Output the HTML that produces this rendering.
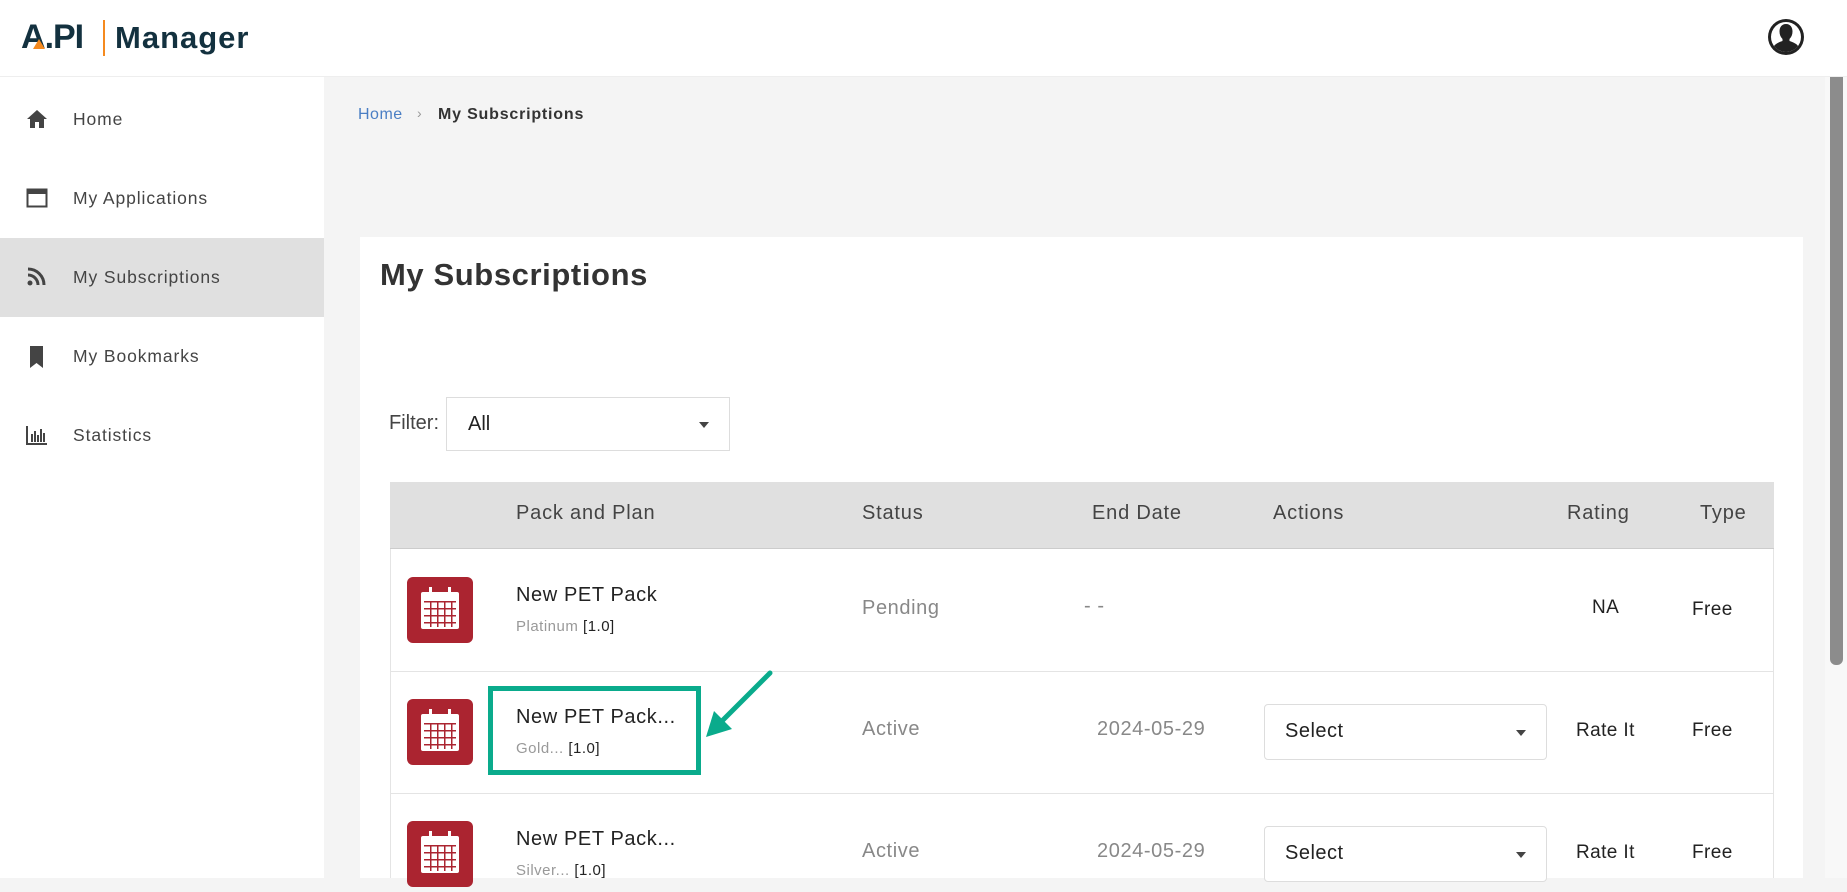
<!DOCTYPE html>
<html><head><meta charset="utf-8"><style>
*{box-sizing:border-box;margin:0;padding:0}
body{width:1847px;height:878px;overflow:hidden;background:#f4f4f4;font-family:"Liberation Sans",sans-serif;position:relative;color:#333}
.abs{position:absolute}
.hdr{left:0;top:0;width:1847px;height:77px;background:#fff;border-bottom:1px solid #eee}
.side{left:0;top:77px;width:324px;height:801px;background:#fff}
.item{position:absolute;left:0;width:324px;height:79px;font-size:17.5px;color:#444;line-height:79px;padding-left:73px;letter-spacing:.9px}
.item svg{position:absolute;left:26px;top:29px}
.card{left:360px;top:237px;width:1443px;height:641px;background:#fff}
.th{position:absolute;top:502px;font-size:20px;color:#444;letter-spacing:.8px}
.row{position:absolute;left:390px;width:1384px;border-top:1px solid #e4e4e4}
.ic{position:absolute;left:407px;width:66px;height:66px;background:#ab2430;border-radius:6px}
.nm{position:absolute;left:516px;font-size:20px;color:#222;letter-spacing:.6px}
.sb{position:absolute;left:516px;font-size:15px;color:#999;letter-spacing:.5px}
.sb span{color:#222}
.g{position:absolute;font-size:20px;color:#888;letter-spacing:.6px}
.d{position:absolute;font-size:19px;color:#222;letter-spacing:.4px}
.sel{position:absolute;left:1264px;width:283px;height:56px;border:1px solid #ddd;border-radius:4px;background:#fff;font-size:20px;color:#222;padding:15px 20px;letter-spacing:.5px}
.sel:after{content:"";position:absolute;right:20px;top:25px;border:5px solid transparent;border-top:6px solid #444}
</style></head><body>
<div class="abs hdr"></div>
<div class="abs" style="left:21px;top:18px;font-size:34px;font-weight:bold;color:#13313f;letter-spacing:-1px">
<span style="position:relative">A<span style="position:absolute;left:12px;top:21px;width:0;height:0;border-left:6px solid transparent;border-right:6px solid transparent;border-bottom:10px solid #f58a1f"></span></span>.PI</div>
<div class="abs" style="left:103px;top:20px;width:2px;height:36px;background:#f58a1f"></div>
<div class="abs" style="left:115px;top:20px;font-size:31px;font-weight:bold;color:#13313f;letter-spacing:1px">Manager</div>
<svg class="abs" style="left:1767px;top:18px" width="38" height="38" viewBox="0 0 38 38"><circle cx="19" cy="19" r="18" fill="#222"/><circle cx="19" cy="19" r="15" fill="#fff"/><path d="M19 6c-4.5 0-6.5 3.5-6.5 7.5 0 3 1 5.5 3 7.5v2c-3 1-7 2.5-8.5 5a15 15 0 0 0 24 0c-1.5-2.5-5.5-4-8.5-5v-2c2-2 3-4.5 3-7.5C25.5 9.5 23.5 6 19 6z" fill="#222"/></svg>
<div class="abs side"></div>
<div class="item" style="top:80px"><svg width="22" height="20" viewBox="0 0 22 20"><path d="M11 1L1 10h3v9h5v-6h4v6h5v-9h3z" fill="#444"/></svg>Home</div>
<div class="item" style="top:159px"><svg width="22" height="20" viewBox="0 0 22 20"><rect x="1.5" y="1.5" width="19" height="17" fill="none" stroke="#444" stroke-width="2"/><rect x="1" y="1" width="20" height="5" fill="#444"/></svg>My Applications</div>
<div class="item" style="top:238px;background:#e0e0e0"><svg width="22" height="20" viewBox="0 0 22 20"><circle cx="4" cy="16" r="2.5" fill="#444"/><path d="M2 8a10 10 0 0 1 10 10M2 2a16 16 0 0 1 16 16" stroke="#444" stroke-width="3" fill="none"/></svg>My Subscriptions</div>
<div class="item" style="top:317px"><svg width="22" height="22" viewBox="0 0 22 22"><path d="M4 0h13v22l-6.5-5L4 22z" fill="#444"/></svg>My Bookmarks</div>
<div class="item" style="top:396px"><svg width="22" height="20" viewBox="0 0 22 20"><path d="M1 1v18h20" stroke="#444" stroke-width="2" fill="none"/><path d="M6 9v8M9 6v11M12 10v7M15 4v13M18 8v9" stroke="#444" stroke-width="2"/></svg>Statistics</div>
<div class="abs" style="left:358px;top:106px;font-size:16px;color:#4a7ec4;letter-spacing:.5px">Home</div>
<div class="abs" style="left:417px;top:105px;font-size:14px;color:#999">›</div>
<div class="abs" style="left:438px;top:106px;font-size:16px;color:#333;font-weight:bold;letter-spacing:.8px">My Subscriptions</div>
<div class="abs card"></div>
<div class="abs" style="left:380px;top:257px;font-size:31px;font-weight:bold;color:#333;letter-spacing:.6px">My Subscriptions</div>
<div class="abs" style="left:389px;top:412px;font-size:20px;color:#444">Filter:</div>
<div class="abs" style="left:446px;top:397px;width:284px;height:54px;border:1px solid #ddd;background:#fff;font-size:20px;color:#222;padding:15px 21px">All<span style="position:absolute;right:20px;top:24px;border:5px solid transparent;border-top:6px solid #444"></span></div>
<div class="abs" style="left:390px;top:482px;width:1384px;height:396px;border-left:1px solid #e4e4e4;border-right:1px solid #e4e4e4"></div>
<div class="abs" style="left:390px;top:482px;width:1384px;height:67px;background:#e0e0e0;border-bottom:1px solid #ccc"></div>
<div class="th" style="left:516px">Pack and Plan</div>
<div class="th" style="left:862px">Status</div>
<div class="th" style="left:1092px">End Date</div>
<div class="th" style="left:1273px">Actions</div>
<div class="th" style="left:1567px">Rating</div>
<div class="th" style="left:1700px">Type</div>
<div class="row" style="top:671px"></div>
<div class="row" style="top:793px"></div>
<svg width="0" height="0" style="position:absolute"><defs><g id="cal"><rect x="14" y="15" width="38" height="37" rx="2" fill="#fff"/><rect x="22" y="10" width="3" height="8" fill="#fff"/><rect x="41" y="10" width="3" height="8" fill="#fff"/><g fill="#ab2430"><rect x="17" y="24" width="32" height="1.5"/><rect x="17" y="31" width="32" height="1.5"/><rect x="17" y="38" width="32" height="1.5"/><rect x="17" y="45" width="32" height="1.5"/><rect x="23" y="24" width="1.5" height="26"/><rect x="30" y="24" width="1.5" height="26"/><rect x="37" y="24" width="1.5" height="26"/><rect x="44" y="24" width="1.5" height="26"/></g></g></defs></svg>
<div class="ic" style="top:577px"><svg width="66" height="66"><use href="#cal"/></svg></div>
<div class="ic" style="top:699px"><svg width="66" height="66"><use href="#cal"/></svg></div>
<div class="ic" style="top:821px"><svg width="66" height="66"><use href="#cal"/></svg></div>
<div class="nm" style="top:584px">New PET Pack</div>
<div class="sb" style="top:618px">Platinum <span>[1.0]</span></div>
<div class="nm" style="top:706px">New PET Pack...</div>
<div class="sb" style="top:740px">Gold... <span>[1.0]</span></div>
<div class="nm" style="top:828px">New PET Pack...</div>
<div class="sb" style="top:862px">Silver... <span>[1.0]</span></div>
<div class="g" style="left:862px;top:597px">Pending</div>
<div class="g" style="left:1084px;top:595px">- -</div>
<div class="d" style="left:1592px;top:597px">NA</div>
<div class="d" style="left:1692px;top:599px">Free</div>
<div class="g" style="left:862px;top:718px">Active</div>
<div class="g" style="left:1097px;top:718px">2024-05-29</div>
<div class="sel" style="top:704px">Select</div>
<div class="d" style="left:1576px;top:720px">Rate It</div>
<div class="d" style="left:1692px;top:720px">Free</div>
<div class="g" style="left:862px;top:840px">Active</div>
<div class="g" style="left:1097px;top:840px">2024-05-29</div>
<div class="sel" style="top:826px">Select</div>
<div class="d" style="left:1576px;top:842px">Rate It</div>
<div class="d" style="left:1692px;top:842px">Free</div>
<div class="abs" style="left:488px;top:686px;width:213px;height:89px;border:5px solid #0aab8c"></div>
<svg class="abs" style="left:700px;top:665px" width="80" height="80" viewBox="0 0 80 80"><path d="M70 8L14 64" stroke="#0aab8c" stroke-width="5" stroke-linecap="round"/><path d="M6 72l8-26 18 18z" fill="#0aab8c"/></svg>
<div class="abs" style="left:1825px;top:77px;width:22px;height:801px;background:#f8f8f8"></div>
<div class="abs" style="left:1830px;top:77px;width:13px;height:588px;background:#8c8c8c;border-radius:0 0 6px 6px"></div>
</body></html>
